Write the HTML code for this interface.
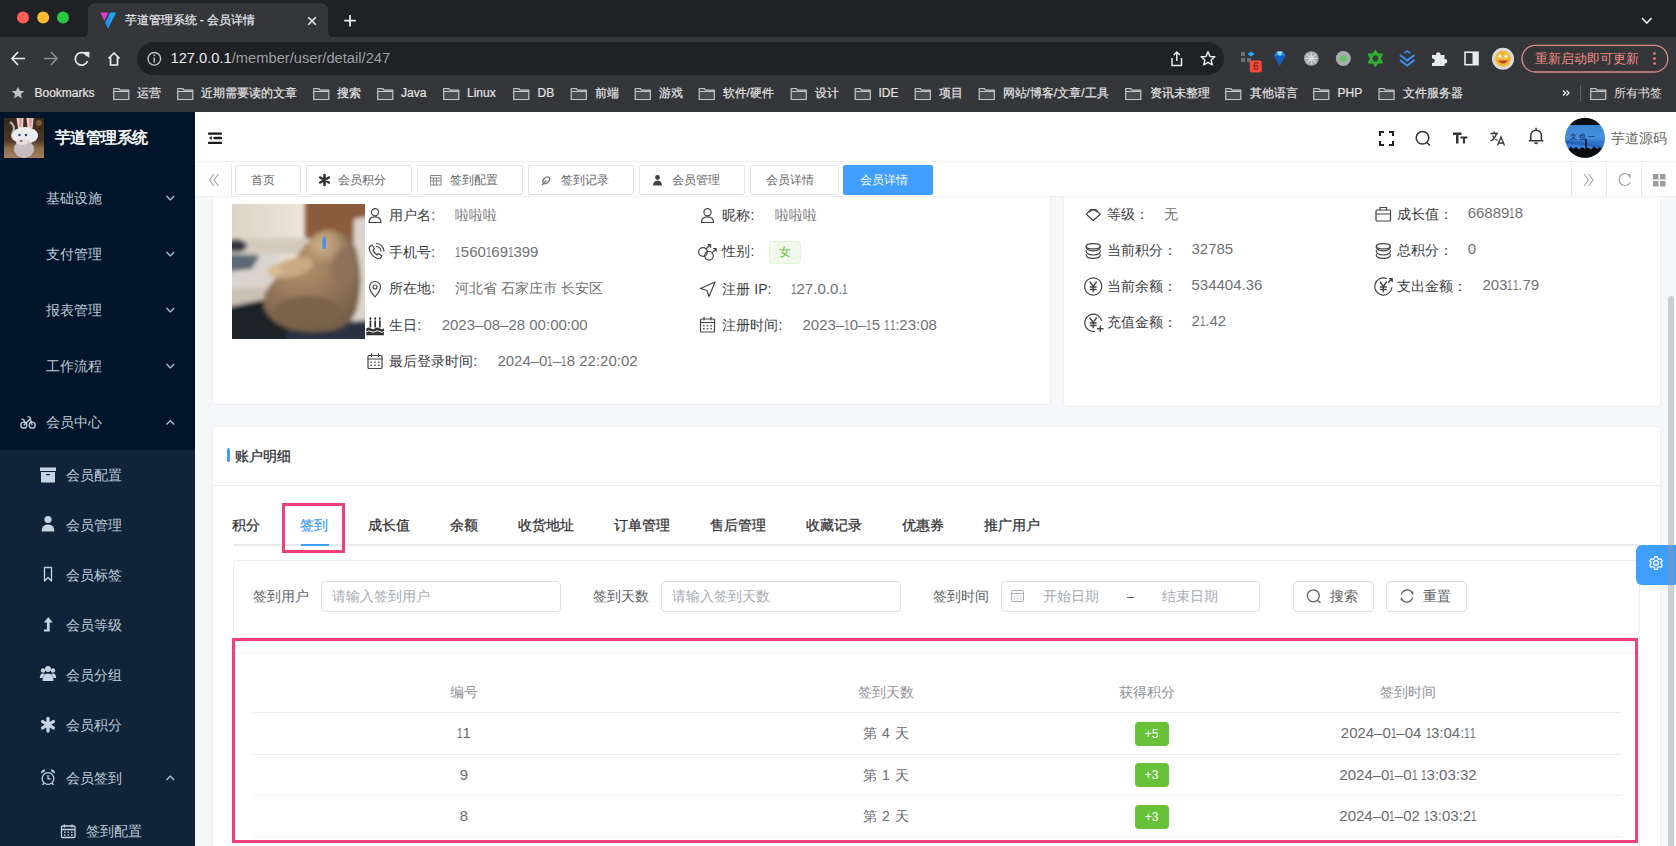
<!DOCTYPE html>
<html><head><meta charset="utf-8">
<style>
*{box-sizing:border-box;margin:0;padding:0}
html,body{width:1676px;height:846px;overflow:hidden;background:#f5f7f9;font-family:"Liberation Sans",sans-serif}
.a{position:absolute}
.t{position:absolute;white-space:nowrap}
svg{position:absolute;overflow:visible}
/* chrome */
#tabstrip{left:0;top:0;width:1676px;height:38px;background:#202124}
#toolbar{left:0;top:37px;width:1676px;height:75px;background:#35363a}
#omni{left:137px;top:42px;width:1087px;height:33px;border-radius:17px;background:#202124}
.bm{font-size:12px;color:#e3e3e3;line-height:16px;top:85px;-webkit-text-stroke:0.2px #e3e3e3}
/* app */
#side{left:0;top:112px;width:195px;height:734px;background:#001529}
#sub{left:0;top:450px;width:195px;height:396px;background:#0f2438}
.mi{font-size:14px;color:#bfcbd9;line-height:20px}
#header{left:195px;top:112px;width:1481px;height:50px;background:#fff;border-bottom:1px solid #eef0f3}
#tags{left:195px;top:162px;width:1481px;height:35px;background:#fff;border-bottom:1px solid #eef0f3}
.tag{position:absolute;top:165px;height:30px;border:1px solid #e3e3e5;border-radius:2px;font-size:12px;color:#666;line-height:29.5px;white-space:nowrap}
.card{position:absolute;background:#fff;border:1px solid #ebeef5;border-radius:4px}
.lab{font-size:14px;color:#303133;line-height:20px}
.val{font-size:14px;color:#606266;line-height:20px}
.lab2{font-size:14px;line-height:20px;color:#3b3c3f}
.val2{font-size:14px;line-height:20px;color:#707275}
.num{font-size:15px}
.n1{display:inline-block;width:5.45px;text-indent:-1.45px;transform:scaleX(.68)}
</style></head><body>
<!-- ============ BROWSER CHROME ============ -->
<div id="tabstrip" class="a"></div>
<div id="toolbar" class="a"></div>
<div id="omni" class="a"></div>

<svg style="left:0;top:0" width="1676" height="112">
 <path d="M80,38 Q88,38 88,30 L88,11 Q88,3 96,3 L320,3 Q328,3 328,11 L328,30 Q328,38 336,38 Z" fill="#35363a"/>
 <circle cx="23" cy="17.5" r="6" fill="#fe5f57"/>
 <circle cx="43.2" cy="17.5" r="6" fill="#febc2e"/>
 <circle cx="63" cy="17.5" r="6" fill="#28c840"/>
 <!-- favicon -->
 <path d="M100.3,12.6 L108.4,12.6 L104.3,20.8 Z" fill="#e23ec8"/>
 <path d="M110,12.6 L116.2,12.6 L108.1,28.6 L105.2,22.7 Z" fill="#1aa6f2"/>
 <path d="M105.2,22.7 L108.3,16.5 L110.5,18 L108.1,28.6 Z" fill="#2f7fe6" opacity=".7"/>
 <!-- close x -->
 <path d="M308.3,17.3 L315.8,24.8 M315.8,17.3 L308.3,24.8" stroke="#e8eaed" stroke-width="1.6"/>
 <!-- plus -->
 <path d="M350,15 V26.5 M344.3,20.7 H355.8" stroke="#e8eaed" stroke-width="1.8"/>
 <!-- chevron down -->
 <path d="M1642,18 L1646.8,23 L1651.6,18" stroke="#e8eaed" stroke-width="1.6" fill="none"/>
 <!-- back -->
 <path d="M12,58.5 H25 M18,52 L12,58.5 L18,65" stroke="#e8eaed" stroke-width="1.7" fill="none"/>
 <!-- fwd -->
 <path d="M44,58.5 H57 M51,52 L57,58.5 L51,65" stroke="#8b8d91" stroke-width="1.7" fill="none"/>
 <!-- reload -->
 <path d="M87.2,56 A6.3,6.3 0 1 0 87.5,61" stroke="#e8eaed" stroke-width="1.7" fill="none"/>
 <path d="M84,52.5 L89,52.3 L88.8,57.3 Z" fill="#e8eaed" stroke="#e8eaed" stroke-width="1"/>
 <!-- home -->
 <path d="M108.5,58.5 L114,53 L119.5,58.5 M110.5,57 V65 H117.5 V57" stroke="#e8eaed" stroke-width="1.7" fill="none" stroke-linejoin="round"/>
 <!-- info -->
 <circle cx="154.3" cy="58.8" r="6.3" stroke="#bdc1c6" stroke-width="1.4" fill="none"/>
 <path d="M154.3,57.5 V62.5" stroke="#bdc1c6" stroke-width="1.5"/>
 <circle cx="154.3" cy="55.3" r=".9" fill="#bdc1c6"/>
 <!-- share -->
 <path d="M1172,58 V65.5 H1181.5 V58 M1176.8,61 V52 M1173.8,55 L1176.8,52 L1179.8,55" stroke="#e8eaed" stroke-width="1.5" fill="none" stroke-linejoin="round"/>
 <!-- star -->
 <path d="M1208,51.8 L1210,56.4 L1214.8,56.8 L1211.2,60 L1212.2,64.8 L1208,62.3 L1203.8,64.8 L1204.8,60 L1201.2,56.8 L1206,56.4 Z" stroke="#e8eaed" stroke-width="1.5" fill="none" stroke-linejoin="round"/>
 <!-- ext1 grid + badge -->
 <rect x="1241" y="52" width="4" height="4" fill="#6b6e73"/><rect x="1241" y="58" width="4" height="4" fill="#6b6e73"/><rect x="1247" y="58" width="4" height="4" fill="#6b6e73"/>
 <path d="M1251,51.5 L1254.5,54 L1251,56.5 L1247.5,54 Z" fill="#20b0f8"/>
 <rect x="1249.7" y="60.6" width="12" height="12" rx="2" fill="#f04a3a"/>
 <!-- diamond -->
 <path d="M1274,55.5 L1277,51.5 L1282.5,51.5 L1285.5,55.5 L1279.7,65.5 Z" fill="#1e8ef0"/>
 <path d="M1274,55.5 L1285.5,55.5 L1279.7,65.5 Z" fill="#0d5fc0"/>
 <path d="M1277,51.5 L1282.5,51.5 L1281,55.5 L1278.5,55.5 Z" fill="#9ad8ff"/>
 <!-- gray circles -->
 <circle cx="1311.3" cy="58.5" r="7.3" fill="#a9abae"/>
 <path d="M1307,54.5 L1315.6,62.5 M1315.6,54.5 L1307,62.5 M1311.3,52.5 V64.5 M1305.3,58.5 H1317.3" stroke="#dadcdf" stroke-width="1.2"/>
 <circle cx="1343.3" cy="58.5" r="7.5" fill="#a9abae"/>
 <circle cx="1343.3" cy="58.5" r="3.6" fill="#6cc26c"/>
 <!-- green star -->
 <path d="M1375.4,51 L1382,62.5 H1368.8 Z M1375.4,66 L1368.8,54.5 H1382 Z" stroke="#2fb52f" stroke-width="1.8" fill="none" stroke-linejoin="round"/>
 <!-- blue chevrons -->
 <path d="M1400,55 L1407.2,60.5 L1414.4,55 M1400,60 L1407.2,65.5 L1414.4,60" stroke="#3d8ef5" stroke-width="2" fill="none"/>
 <path d="M1404.5,53 L1407.2,51 L1410,53" stroke="#3d8ef5" stroke-width="1.6" fill="none"/>
 <!-- puzzle -->
 <path d="M1432,55 H1436 A2.3,2.3 0 1 1 1440.5,55 H1444.5 V59 A2.3,2.3 0 1 1 1444.5,63.5 V66 H1432 V63 A2.3,2.3 0 1 0 1432,58.5 Z" fill="#e8eaed"/>
 <!-- sidebar icon -->
 <rect x="1465" y="52.2" width="13" height="12.5" stroke="#e8eaed" stroke-width="1.6" fill="none"/>
 <rect x="1472.5" y="52.2" width="5.5" height="12.5" fill="#e8eaed"/>
 <!-- emoji avatar -->
 <circle cx="1503" cy="58.8" r="11" fill="#dadada"/>
 <circle cx="1503" cy="58.8" r="8" fill="#f5b731"/>
 <path d="M1497.5,60.5 Q1503,66.5 1508.5,60.5 Z" fill="#c0392b"/>
 <circle cx="1500" cy="56.2" r="1.6" fill="#fff"/><circle cx="1506" cy="56.2" r="1.6" fill="#fff"/>
 <!-- update pill -->
 <rect x="1522" y="45.3" width="145.8" height="26.7" rx="13.3" stroke="#d98a85" stroke-width="1.3" fill="none"/>
 <circle cx="1654.5" cy="53.5" r="1.3" fill="#f28b82"/><circle cx="1654.5" cy="58.5" r="1.3" fill="#f28b82"/><circle cx="1654.5" cy="63.5" r="1.3" fill="#f28b82"/>
 <!-- bookmarks star -->
 <path d="M18,86.8 L19.8,90.8 L24.2,91.2 L20.9,94.1 L21.9,98.4 L18,96.1 L14.1,98.4 L15.1,94.1 L11.8,91.2 L16.2,90.8 Z" fill="#bdc1c6"/>
 <!-- » and separator -->
 <path d="M1563,90.5 L1565.5,93 L1563,95.5 M1566.5,90.5 L1569,93 L1566.5,95.5" stroke="#e8eaed" stroke-width="1.3" fill="none"/>
 <rect x="1580" y="85" width="1" height="16" fill="#5f6368"/>
</svg>
<div class="t" style="left:124.5px;top:12px;font-size:12px;line-height:16px;color:#e8eaed;-webkit-text-stroke:0.2px #e8eaed">芋道管理系统 - 会员详情</div>
<div class="t" style="left:170.5px;top:49.5px;font-size:14.7px;line-height:17px;color:#e8eaed">127.0.0.1<span style="color:#9aa0a6">/member/user/detail/247</span></div>
<div class="t" style="left:1249.7px;width:12px;text-align:center;top:60.8px;font-size:10px;line-height:12px;color:#6a1a10">6</div>
<div class="t" style="left:1534.5px;top:50.5px;font-size:13px;line-height:16px;color:#f28b82">重新启动即可更新</div>
<div class="t" style="left:1614px;top:85px;font-size:12px;line-height:16px;color:#e3e3e3">所有书签</div>
<svg style="left:0;top:0" width="1676" height="112"><path d="M113.7,88.5 h5 l1.5,1.6 h8.6 v9.4 h-15.1 Z" fill="#4a4c50" stroke="#c4c7c5" stroke-width="1.2" stroke-linejoin="round"/><path d="M113.7,91.5 h15.1" stroke="#c4c7c5" stroke-width="1"/><path d="M177.7,88.5 h5 l1.5,1.6 h8.6 v9.4 h-15.1 Z" fill="#4a4c50" stroke="#c4c7c5" stroke-width="1.2" stroke-linejoin="round"/><path d="M177.7,91.5 h15.1" stroke="#c4c7c5" stroke-width="1"/><path d="M313.7,88.5 h5 l1.5,1.6 h8.6 v9.4 h-15.1 Z" fill="#4a4c50" stroke="#c4c7c5" stroke-width="1.2" stroke-linejoin="round"/><path d="M313.7,91.5 h15.1" stroke="#c4c7c5" stroke-width="1"/><path d="M377.7,88.5 h5 l1.5,1.6 h8.6 v9.4 h-15.1 Z" fill="#4a4c50" stroke="#c4c7c5" stroke-width="1.2" stroke-linejoin="round"/><path d="M377.7,91.5 h15.1" stroke="#c4c7c5" stroke-width="1"/><path d="M443.7,88.5 h5 l1.5,1.6 h8.6 v9.4 h-15.1 Z" fill="#4a4c50" stroke="#c4c7c5" stroke-width="1.2" stroke-linejoin="round"/><path d="M443.7,91.5 h15.1" stroke="#c4c7c5" stroke-width="1"/><path d="M513.7,88.5 h5 l1.5,1.6 h8.6 v9.4 h-15.1 Z" fill="#4a4c50" stroke="#c4c7c5" stroke-width="1.2" stroke-linejoin="round"/><path d="M513.7,91.5 h15.1" stroke="#c4c7c5" stroke-width="1"/><path d="M571.2,88.5 h5 l1.5,1.6 h8.6 v9.4 h-15.1 Z" fill="#4a4c50" stroke="#c4c7c5" stroke-width="1.2" stroke-linejoin="round"/><path d="M571.2,91.5 h15.1" stroke="#c4c7c5" stroke-width="1"/><path d="M635.2,88.5 h5 l1.5,1.6 h8.6 v9.4 h-15.1 Z" fill="#4a4c50" stroke="#c4c7c5" stroke-width="1.2" stroke-linejoin="round"/><path d="M635.2,91.5 h15.1" stroke="#c4c7c5" stroke-width="1"/><path d="M699.2,88.5 h5 l1.5,1.6 h8.6 v9.4 h-15.1 Z" fill="#4a4c50" stroke="#c4c7c5" stroke-width="1.2" stroke-linejoin="round"/><path d="M699.2,91.5 h15.1" stroke="#c4c7c5" stroke-width="1"/><path d="M791.2,88.5 h5 l1.5,1.6 h8.6 v9.4 h-15.1 Z" fill="#4a4c50" stroke="#c4c7c5" stroke-width="1.2" stroke-linejoin="round"/><path d="M791.2,91.5 h15.1" stroke="#c4c7c5" stroke-width="1"/><path d="M855.2,88.5 h5 l1.5,1.6 h8.6 v9.4 h-15.1 Z" fill="#4a4c50" stroke="#c4c7c5" stroke-width="1.2" stroke-linejoin="round"/><path d="M855.2,91.5 h15.1" stroke="#c4c7c5" stroke-width="1"/><path d="M915.2,88.5 h5 l1.5,1.6 h8.6 v9.4 h-15.1 Z" fill="#4a4c50" stroke="#c4c7c5" stroke-width="1.2" stroke-linejoin="round"/><path d="M915.2,91.5 h15.1" stroke="#c4c7c5" stroke-width="1"/><path d="M979.2,88.5 h5 l1.5,1.6 h8.6 v9.4 h-15.1 Z" fill="#4a4c50" stroke="#c4c7c5" stroke-width="1.2" stroke-linejoin="round"/><path d="M979.2,91.5 h15.1" stroke="#c4c7c5" stroke-width="1"/><path d="M1125.7,88.5 h5 l1.5,1.6 h8.6 v9.4 h-15.1 Z" fill="#4a4c50" stroke="#c4c7c5" stroke-width="1.2" stroke-linejoin="round"/><path d="M1125.7,91.5 h15.1" stroke="#c4c7c5" stroke-width="1"/><path d="M1225.7,88.5 h5 l1.5,1.6 h8.6 v9.4 h-15.1 Z" fill="#4a4c50" stroke="#c4c7c5" stroke-width="1.2" stroke-linejoin="round"/><path d="M1225.7,91.5 h15.1" stroke="#c4c7c5" stroke-width="1"/><path d="M1313.7,88.5 h5 l1.5,1.6 h8.6 v9.4 h-15.1 Z" fill="#4a4c50" stroke="#c4c7c5" stroke-width="1.2" stroke-linejoin="round"/><path d="M1313.7,91.5 h15.1" stroke="#c4c7c5" stroke-width="1"/><path d="M1379.0,88.5 h5 l1.5,1.6 h8.6 v9.4 h-15.1 Z" fill="#4a4c50" stroke="#c4c7c5" stroke-width="1.2" stroke-linejoin="round"/><path d="M1379.0,91.5 h15.1" stroke="#c4c7c5" stroke-width="1"/><path d="M1590.7,88.5 h5 l1.5,1.6 h8.6 v9.4 h-15.1 Z" fill="#4a4c50" stroke="#c4c7c5" stroke-width="1.2" stroke-linejoin="round"/><path d="M1590.7,91.5 h15.1" stroke="#c4c7c5" stroke-width="1"/></svg>
<div class="t bm" style="left:34.5px">Bookmarks</div>
<div class="t bm" style="left:137px">运营</div>
<div class="t bm" style="left:201px">近期需要读的文章</div>
<div class="t bm" style="left:337px">搜索</div>
<div class="t bm" style="left:401px">Java</div>
<div class="t bm" style="left:467px">Linux</div>
<div class="t bm" style="left:537.5px">DB</div>
<div class="t bm" style="left:594.5px">前端</div>
<div class="t bm" style="left:658.5px">游戏</div>
<div class="t bm" style="left:722.5px">软件/硬件</div>
<div class="t bm" style="left:814.5px">设计</div>
<div class="t bm" style="left:878.5px">IDE</div>
<div class="t bm" style="left:938.5px">项目</div>
<div class="t bm" style="left:1002.5px">网站/博客/文章/工具</div>
<div class="t bm" style="left:1149.5px">资讯未整理</div>
<div class="t bm" style="left:1249.5px">其他语言</div>
<div class="t bm" style="left:1337.5px">PHP</div>
<div class="t bm" style="left:1402.5px">文件服务器</div>
<div id="side" class="a"></div>
<div id="sub" class="a"></div>

<!-- ============ CONTENT ============ -->
<div class="card" style="left:211.5px;top:150px;width:839.5px;height:255px"></div>
<div class="card" style="left:1063px;top:150px;width:597.5px;height:257px"></div>
<svg style="left:232px;top:204px" width="133" height="135">
 <defs>
  <linearGradient id="wall" x1="0" y1="0" x2="1" y2="0"><stop offset="0" stop-color="#ddd3c6"/><stop offset=".5" stop-color="#ece4d9"/><stop offset="1" stop-color="#e4dbd0"/></linearGradient>
  <radialGradient id="cat" cx=".4" cy=".3" r=".7"><stop offset="0" stop-color="#b39570"/><stop offset=".55" stop-color="#95785a"/><stop offset="1" stop-color="#75604a"/></radialGradient>
  <radialGradient id="head" cx=".35" cy=".4" r=".65"><stop offset="0" stop-color="#cfb28c"/><stop offset=".6" stop-color="#b0926e"/><stop offset="1" stop-color="#8e745a"/></radialGradient>
  <filter id="bl" x="-10%" y="-10%" width="120%" height="120%"><feGaussianBlur stdDeviation="2.2"/></filter>
  <clipPath id="pc"><rect width="133" height="135"/></clipPath>
 </defs>
 <g clip-path="url(#pc)">
 <rect width="133" height="135" fill="url(#wall)"/>
 <g filter="url(#bl)">
  <path d="M73,-8 L140,-8 L140,38 L126,44 L73,34 Z" fill="#8c5a3e"/>
  <path d="M122,15 L140,12 L140,125 L120,122 Z" fill="#ddd5cb"/>
  <path d="M-8,35 L75,34 L72,50 L-8,50 Z" fill="#d3c9bc"/>
  <ellipse cx="4" cy="42" rx="11" ry="6.5" fill="#30343c"/>
  <path d="M-8,48 L46,49 L52,82 L-8,86 Z" fill="#d9d4cd"/>
  <path d="M-8,50 L28,51 L20,65 L-8,68 Z" fill="#5c6874"/>
  <path d="M-8,86 L50,82 L30,98 L-8,106 Z" fill="#cac0b4"/>
  <path d="M-8,104 L30,96 L62,120 L62,142 L-8,142 Z" fill="#1f2026"/>
  <path d="M55,121 L140,116 L140,142 L55,142 Z" fill="#2a3342"/>
  <path d="M62,58 Q72,36 92,28 Q115,24 124,45 Q132,72 126,100 Q122,124 96,127 Q66,131 46,120 Q28,108 32,92 Q38,76 62,58 Z" fill="url(#cat)"/>
  <ellipse cx="96" cy="45" rx="20" ry="19" fill="url(#head)"/>
  <ellipse cx="112" cy="64" rx="11" ry="20" fill="#8c735a"/>
  <ellipse cx="60" cy="64" rx="22" ry="9" fill="#c8ab84" transform="rotate(-15 60 64)"/>
  <ellipse cx="42" cy="67" rx="7" ry="5.5" fill="#d6bd95"/>
  <ellipse cx="76" cy="108" rx="34" ry="16" fill="#7a624c"/>
 </g>
 <rect x="90.5" y="33" width="3.5" height="12" rx="1.5" fill="#4a8fe0"/>
 </g>
</svg>
<div class="t lab2" style="left:389.3px;top:205.0px">用户名:</div>
<div class="t val2" style="left:455.4px;top:205.0px">啦啦啦</div>
<div class="t lab2" style="left:389.3px;top:242.2px">手机号:</div>
<div class="t val2 num" style="left:455.4px;top:242.2px"><span class="n1">1</span>560<span class="n1">1</span>69<span class="n1">1</span>399</div>
<div class="t lab2" style="left:389.3px;top:278.4px">所在地:</div>
<div class="t val2" style="left:455.4px;top:278.4px">河北省 石家庄市 长安区</div>
<div class="t lab2" style="left:389.3px;top:314.6px">生日:</div>
<div class="t val2 num" style="left:441.7px;top:314.6px">2023–08–28 00:00:00</div>
<div class="t lab2" style="left:389.3px;top:351.0px">最后登录时间:</div>
<div class="t val2 num" style="left:497.4px;top:351.0px">2024–0<span class="n1">1</span>–<span class="n1">1</span>8 22:20:02</div>
<div class="t lab2" style="left:722.4px;top:204.9px">昵称:</div>
<div class="t val2" style="left:774.5px;top:204.9px">啦啦啦</div>
<div class="t lab2" style="left:722.4px;top:278.6px">注册 IP:</div>
<div class="t val2 num" style="left:791.1px;top:278.6px"><span class="n1">1</span>27.0.0.<span class="n1">1</span></div>
<div class="t lab2" style="left:722.4px;top:314.5px">注册时间:</div>
<div class="t val2 num" style="left:802.5px;top:314.5px">2023–<span class="n1">1</span>0–<span class="n1">1</span>5 <span class="n1">1</span><span class="n1">1</span>:23:08</div>
<div class="t lab2" style="left:1107px;top:204.0px">等级：</div>
<div class="t val2" style="left:1163.6px;top:204.0px">无</div>
<div class="t lab2" style="left:1107px;top:240.0px">当前积分：</div>
<div class="t val2 num" style="left:1191.5px;top:239.2px">32785</div>
<div class="t lab2" style="left:1107px;top:276.0px">当前余额：</div>
<div class="t val2 num" style="left:1191.5px;top:275.2px">534404.36</div>
<div class="t lab2" style="left:1107px;top:311.8px">充值金额：</div>
<div class="t val2 num" style="left:1191.5px;top:311.0px">2<span class="n1">1</span>.42</div>
<div class="t lab2" style="left:1397.2px;top:204.0px">成长值：</div>
<div class="t val2 num" style="left:1467.7px;top:203.2px">66889<span class="n1">1</span>8</div>
<div class="t lab2" style="left:1397.2px;top:240.0px">总积分：</div>
<div class="t val2 num" style="left:1467.7px;top:239.2px">0</div>
<div class="t lab2" style="left:1397.2px;top:276.0px">支出金额：</div>
<div class="t val2 num" style="left:1482.4px;top:275.2px">203<span class="n1">1</span><span class="n1">1</span>.79</div>
<div class="t lab2" style="left:722.4px;top:241.4px">性别:</div>
<div class="a" style="left:769.2px;top:240.6px;width:32px;height:23.7px;background:#f0f9eb;border:1px solid #e1f3d8;border-radius:4px;font-size:12px;line-height:21px;color:#67c23a;text-align:center">女</div>

<svg style="left:0;top:0" width="1676" height="846">
 <g stroke="#444" stroke-width="1.2" fill="none" stroke-linecap="round" stroke-linejoin="round">
  <!-- user c1 -->
  <circle cx="375" cy="212.3" r="3.6"/><path d="M369,222.5 Q369,216.8 375,216.8 Q381,216.8 381,222.5 Z"/>
  <!-- phone -->
  <path d="M369.5,247 L372,245 L374.5,248.5 L373,250 Q374,253 377,255 L378.5,253.5 L382,256 L380,258.5 Q375,259 371.5,254 Q368.5,250 369.5,247 Z"/>
  <path d="M376.5,246.5 A5,5 0 0 1 381,251 M376.5,243.5 A8,8 0 0 1 384,251"/>
  <!-- pin -->
  <path d="M375,296.8 Q369.5,291 369.5,287 A5.5,5.5 0 0 1 380.5,287 Q380.5,291 375,296.8 Z"/><circle cx="375" cy="287" r="2"/>
  <!-- calendar c1 -->
  <rect x="368" y="355.5" width="14" height="13" rx="1"/><path d="M368,359 H382 M371.5,353.5 V356.5 M378.5,353.5 V356.5"/>
  <!-- user c2 -->
  <circle cx="707.5" cy="212.3" r="3.6"/><path d="M701.5,222.5 Q701.5,216.8 707.5,216.8 Q713.5,216.8 713.5,222.5 Z"/>
  <!-- gender -->
  <circle cx="703" cy="252" r="4.3"/><circle cx="709" cy="255.8" r="4.3"/><path d="M706,249 L710.3,244.8 M708,244.6 H710.6 V247.2 M712,252.8 L716,248.8 M713.7,248.6 H716.2 V251.1"/>
  <!-- nav arrow -->
  <path d="M715,282 L700.5,288.5 L707,290.5 L709,296.5 Z"/>
  <!-- calendar c2 -->
  <rect x="700.5" y="319" width="14" height="13" rx="1"/><path d="M700.5,322.5 H714.5 M704,317 V320 M711,317 V320"/>
  <!-- diamond -->
  <path d="M1086.3,214.3 L1090.5,209.6 H1096 L1100.2,214.3 L1093.2,220.5 Z"/><path d="M1089.5,211.8 L1093.2,209.6 L1097,211.8"/>
  <!-- coins -->
  <ellipse cx="1093.2" cy="246.3" rx="7" ry="2.6"/><path d="M1086.2,246.3 Q1085.6,250.5 1093.2,250.8 Q1100.8,250.5 1100.2,246.3 M1086.2,250.5 Q1085.6,254.7 1093.2,255 Q1100.8,254.7 1100.2,250.5 M1086.2,254.5 Q1085.6,258.3 1093.2,258.3 Q1100.8,258.3 1100.2,254.5"/>
  <ellipse cx="1383.3" cy="246.3" rx="7" ry="2.6"/><path d="M1376.3,246.3 Q1375.7,250.5 1383.3,250.8 Q1390.9,250.5 1390.3,246.3 M1376.3,250.5 Q1375.7,254.7 1383.3,255 Q1390.9,254.7 1390.3,250.5 M1376.3,254.5 Q1375.7,258.3 1383.3,258.3 Q1390.9,258.3 1390.3,254.5"/>
  <!-- yen circle -->
  <circle cx="1093.2" cy="286.5" r="8.6"/><path d="M1090,282 L1093.2,286.3 L1096.4,282 M1093.2,286.3 V291.8 M1090.3,287 H1096.1 M1090.3,289.5 H1096.1" stroke-width="1.4"/>
  <!-- yen plus -->
  <path d="M1101.6,320.5 A8.6,8.6 0 1 0 1094.5,331.3"/><path d="M1090,318 L1093.2,322.3 L1096.4,318 M1093.2,322.3 V327.8 M1090.3,323 H1096.1 M1090.3,325.5 H1096.1" stroke-width="1.4"/><path d="M1097.5,328.8 H1103 M1100.25,326 V331.6" stroke-width="1.4"/>
  <!-- briefcase -->
  <rect x="1376" y="210" width="14.5" height="11" rx="1"/><path d="M1380,210 V207.5 H1386.5 V210 M1376,214 H1390.5"/>
  <!-- yen arrow -->
  <path d="M1391.9,287.5 A8.6,8.6 0 1 1 1386.5,278.5"/><path d="M1380.1,282 L1383.3,286.3 L1386.5,282 M1383.3,286.3 V291.8 M1380.4,287 H1386.2 M1380.4,289.5 H1386.2" stroke-width="1.4"/><path d="M1388.5,282.3 L1391.8,279 M1389.3,278.6 H1392.2 V281.5" stroke-width="1.4"/>
 </g>
 <!-- cake -->
 <g fill="#333">
  <rect x="369.6" y="320.5" width="1.7" height="7"/><rect x="374.3" y="320.5" width="1.7" height="7"/><rect x="379" y="320.5" width="1.7" height="7"/>
  <ellipse cx="370.45" cy="318.6" rx=".9" ry="1.3"/><ellipse cx="375.15" cy="318.6" rx=".9" ry="1.3"/><ellipse cx="379.85" cy="318.6" rx=".9" ry="1.3"/>
  <path d="M366.3,328.8 Q368.5,326.6 370.7,328.3 Q372.9,330 375.1,328.3 Q377.3,326.6 379.5,328.3 Q381.7,330 383.9,328.3 V335.2 H366.3 Z"/>
 </g>
 <path d="M366.5,332 Q368.7,330 370.9,331.5 Q373.1,333 375.3,331.5 Q377.5,330 379.7,331.5 Q381.9,333 383.7,331.5" stroke="#fff" stroke-width="1" fill="none"/>
 <g fill="#555"><rect x="370.5" y="361.5" width="1.6" height="1.4"/><rect x="374.2" y="361.5" width="1.6" height="1.4"/><rect x="377.9" y="361.5" width="1.6" height="1.4"/><rect x="370.5" y="364.5" width="1.6" height="1.4"/><rect x="374.2" y="364.5" width="1.6" height="1.4"/><rect x="377.9" y="364.5" width="1.6" height="1.4"/>
 <rect x="703" y="325" width="1.6" height="1.4"/><rect x="706.7" y="325" width="1.6" height="1.4"/><rect x="710.4" y="325" width="1.6" height="1.4"/><rect x="703" y="328" width="1.6" height="1.4"/><rect x="706.7" y="328" width="1.6" height="1.4"/><rect x="710.4" y="328" width="1.6" height="1.4"/></g>
</svg>

<!-- ============ ACCOUNT DETAIL ============ -->
<div class="card" style="left:211.5px;top:425.5px;width:1449px;height:500px"></div>
<div class="a" style="left:227px;top:448px;width:3px;height:14px;background:#409eff;border-radius:1.5px"></div>
<div class="t" style="left:235px;top:446px;font-size:14px;line-height:20px;color:#303133;-webkit-text-stroke:0.3px #303133">账户明细</div>
<div class="a" style="left:213px;top:484.5px;width:1446.5px;height:1px;background:#ebeef5"></div>
<div class="a" style="left:232.5px;top:543.5px;width:1407.5px;height:2px;background:#e6e8eb"></div>
<div class="a" style="left:300.5px;top:543.5px;width:28px;height:2px;background:#409eff"></div>
<div class="t" style="left:231.7px;top:514.8px;font-size:14px;line-height:20px;color:#303133;-webkit-text-stroke:0.25px #303133">积分</div>
<div class="t" style="left:299.7px;top:514.8px;font-size:14px;line-height:20px;color:#409eff;-webkit-text-stroke:0.25px #409eff">签到</div>
<div class="t" style="left:367.7px;top:514.8px;font-size:14px;line-height:20px;color:#303133;-webkit-text-stroke:0.25px #303133">成长值</div>
<div class="t" style="left:449.7px;top:514.8px;font-size:14px;line-height:20px;color:#303133;-webkit-text-stroke:0.25px #303133">余额</div>
<div class="t" style="left:517.7px;top:514.8px;font-size:14px;line-height:20px;color:#303133;-webkit-text-stroke:0.25px #303133">收货地址</div>
<div class="t" style="left:613.7px;top:514.8px;font-size:14px;line-height:20px;color:#303133;-webkit-text-stroke:0.25px #303133">订单管理</div>
<div class="t" style="left:709.7px;top:514.8px;font-size:14px;line-height:20px;color:#303133;-webkit-text-stroke:0.25px #303133">售后管理</div>
<div class="t" style="left:805.7px;top:514.8px;font-size:14px;line-height:20px;color:#303133;-webkit-text-stroke:0.25px #303133">收藏记录</div>
<div class="t" style="left:901.7px;top:514.8px;font-size:14px;line-height:20px;color:#303133;-webkit-text-stroke:0.25px #303133">优惠券</div>
<div class="t" style="left:983.7px;top:514.8px;font-size:14px;line-height:20px;color:#303133;-webkit-text-stroke:0.25px #303133">推广用户</div>

<!-- search card -->
<div class="card" style="left:232.5px;top:560px;width:1407px;height:75px"></div>
<div class="t" style="left:253px;top:585.7px;font-size:14px;line-height:20px;color:#606266">签到用户</div>
<div class="a" style="left:321px;top:580.5px;width:240px;height:31.5px;border:1px solid #dcdfe6;border-radius:4px"></div>
<div class="t" style="left:332px;top:585.5px;font-size:14px;line-height:20px;color:#a8abb2">请输入签到用户</div>
<div class="t" style="left:592.5px;top:585.7px;font-size:14px;line-height:20px;color:#606266">签到天数</div>
<div class="a" style="left:661px;top:580.5px;width:240px;height:31.5px;border:1px solid #dcdfe6;border-radius:4px"></div>
<div class="t" style="left:671.5px;top:585.5px;font-size:14px;line-height:20px;color:#a8abb2">请输入签到天数</div>
<div class="t" style="left:933px;top:585.7px;font-size:14px;line-height:20px;color:#606266">签到时间</div>
<div class="a" style="left:1000.5px;top:580.5px;width:259.5px;height:31.5px;border:1px solid #dcdfe6;border-radius:4px"></div>
<div class="t" style="left:1043px;top:585.5px;font-size:14px;line-height:20px;color:#a8abb2">开始日期</div>
<div class="t" style="left:1162px;top:585.5px;font-size:14px;line-height:20px;color:#a8abb2">结束日期</div>
<div class="a" style="left:1126.5px;top:596.5px;width:7.5px;height:1.3px;background:#606266"></div>
<div class="a" style="left:1292.5px;top:580.5px;width:81px;height:31.5px;border:1px solid #dcdfe6;border-radius:4px"></div>
<div class="t" style="left:1329.5px;top:586px;font-size:14px;line-height:20px;color:#606266">搜索</div>
<div class="a" style="left:1385.5px;top:580.5px;width:81px;height:31.5px;border:1px solid #dcdfe6;border-radius:4px"></div>
<div class="t" style="left:1423px;top:586px;font-size:14px;line-height:20px;color:#606266">重置</div>
<svg style="left:0;top:0" width="1676" height="846">
 <g stroke="#a8abb2" stroke-width="1" fill="none"><rect x="1011.5" y="590.5" width="12" height="11" rx="1"/><path d="M1011.5,593.5 H1023.5"/></g>
 <g fill="#c0c4cc"><rect x="1013.5" y="595.5" width="1.5" height="1.2"/><rect x="1016.7" y="595.5" width="1.5" height="1.2"/><rect x="1019.9" y="595.5" width="1.5" height="1.2"/><rect x="1013.5" y="598" width="1.5" height="1.2"/><rect x="1016.7" y="598" width="1.5" height="1.2"/><rect x="1019.9" y="598" width="1.5" height="1.2"/></g>
 <g stroke="#606266" stroke-width="1.3" fill="none">
  <circle cx="1313.3" cy="595.8" r="6"/><path d="M1317.6,600.2 L1320.5,603"/>
  <path d="M1412.5,593.5 A5.8,5.8 0 0 0 1401.5,594.5 M1401.5,598.5 A5.8,5.8 0 0 0 1412.5,597.5"/>
 </g>
 <path d="M1410.5,591.5 L1413.5,591.8 L1413,595 Z M1403.5,600.5 L1400.5,600.2 L1401,597 Z" fill="#606266"/>
</svg>
<!-- table card -->
<div class="card" style="left:232.5px;top:651.5px;width:1407px;height:300px"></div>
<div class="t" style="left:364px;width:200px;text-align:center;top:682px;font-size:14px;line-height:20px;color:#909399">编号</div>
<div class="t" style="left:786px;width:200px;text-align:center;top:682px;font-size:14px;line-height:20px;color:#909399">签到天数</div>
<div class="t" style="left:1047px;width:200px;text-align:center;top:682px;font-size:14px;line-height:20px;color:#909399">获得积分</div>
<div class="t" style="left:1308px;width:200px;text-align:center;top:682px;font-size:14px;line-height:20px;color:#909399">签到时间</div>
<div class="a" style="left:253px;top:711.5px;width:1366.5px;height:1px;background:#ebeef5"></div>
<div class="a" style="left:253px;top:753.5px;width:1366.5px;height:1px;background:#ebeef5"></div>
<div class="a" style="left:253px;top:795px;width:1366.5px;height:1px;background:#ebeef5"></div>
<div class="a" style="left:253px;top:836px;width:1366.5px;height:1px;background:#ebeef5"></div>
<div class="t" style="left:364px;width:200px;text-align:center;top:723.4px;font-size:14px;line-height:20px;color:#696b6f;font-size:15px"><span class="n1">1</span>1</div>
<div class="t" style="left:786px;width:200px;text-align:center;top:723.4px;font-size:14px;line-height:20px;color:#696b6f;word-spacing:1px">第 4 天</div>
<div class="a" style="left:1134.5px;top:721.6px;width:34px;height:24px;background:#67c23a;border-radius:4px;color:#fff;font-size:12px;line-height:24px;text-align:center">+5</div>
<div class="t" style="left:1308px;width:200px;text-align:center;top:723.1px;font-size:15px;line-height:20px;color:#696b6f">2024–0<span class="n1">1</span>–04 <span class="n1">1</span>3:04:<span class="n1">1</span><span class="n1">1</span></div>
<div class="t" style="left:364px;width:200px;text-align:center;top:764.8px;font-size:14px;line-height:20px;color:#696b6f;font-size:15px">9</div>
<div class="t" style="left:786px;width:200px;text-align:center;top:764.8px;font-size:14px;line-height:20px;color:#696b6f;word-spacing:1px">第 1 天</div>
<div class="a" style="left:1134.5px;top:763.0px;width:34px;height:24px;background:#67c23a;border-radius:4px;color:#fff;font-size:12px;line-height:24px;text-align:center">+3</div>
<div class="t" style="left:1308px;width:200px;text-align:center;top:764.5px;font-size:15px;line-height:20px;color:#696b6f">2024–0<span class="n1">1</span>–0<span class="n1">1</span> <span class="n1">1</span>3:03:32</div>
<div class="t" style="left:364px;width:200px;text-align:center;top:806.4px;font-size:14px;line-height:20px;color:#696b6f;font-size:15px">8</div>
<div class="t" style="left:786px;width:200px;text-align:center;top:806.4px;font-size:14px;line-height:20px;color:#696b6f;word-spacing:1px">第 2 天</div>
<div class="a" style="left:1134.5px;top:804.6px;width:34px;height:24px;background:#67c23a;border-radius:4px;color:#fff;font-size:12px;line-height:24px;text-align:center">+3</div>
<div class="t" style="left:1308px;width:200px;text-align:center;top:806.1px;font-size:15px;line-height:20px;color:#696b6f">2024–0<span class="n1">1</span>–02 <span class="n1">1</span>3:03:2<span class="n1">1</span></div>

<!-- red highlight boxes -->
<div class="a" style="left:281.8px;top:502.5px;width:63.3px;height:50px;border:3px solid #f0407a"></div>
<div class="a" style="left:231.5px;top:637.5px;width:1406.5px;height:205.5px;border:3px solid #f0407a"></div>
<!-- gear float -->
<div class="a" style="left:1636px;top:545px;width:45px;height:40px;background:#409eff;border-radius:6px"></div>
<svg style="left:1647.2px;top:553.6px" width="18" height="18" viewBox="0 0 20 20">
 <g stroke="#fff" stroke-width="1.3" fill="none"><circle cx="10" cy="10" r="2.6"/>
 <path d="M8.6,3 H11.4 L11.9,5 L13.6,6 L15.6,5.4 L17,7.8 L15.5,9.2 V10.8 L17,12.2 L15.6,14.6 L13.6,14 L11.9,15 L11.4,17 H8.6 L8.1,15 L6.4,14 L4.4,14.6 L3,12.2 L4.5,10.8 V9.2 L3,7.8 L4.4,5.4 L6.4,6 L8.1,5 Z" stroke-linejoin="round"/></g>
</svg>
<!-- scrollbar -->
<div class="a" style="left:1668.2px;top:296px;width:5.8px;height:560px;background:rgba(150,150,150,0.42);border-radius:3px"></div>
<div id="header" class="a"></div>
<div id="tags" class="a"></div>
<svg style="left:0;top:112px" width="195" height="734">
 <defs><linearGradient id="lg" x1="0" y1="0" x2="0" y2="1"><stop offset="0" stop-color="#3a2a1c"/><stop offset=".55" stop-color="#4a3622"/><stop offset=".75" stop-color="#8a6a48"/><stop offset="1" stop-color="#a08060"/></linearGradient>
 <filter id="lb"><feGaussianBlur stdDeviation=".6"/></filter></defs>
 <g transform="translate(4,6)">
 <rect width="40" height="40" fill="url(#lg)"/>
 <g filter="url(#lb)">
  <circle cx="35" cy="5" r="3" fill="#7a5a3a"/>
  <path d="M6,4 Q12,8 9,14 Q6,19 11,22" stroke="#b0b0b0" stroke-width="2.2" fill="none"/>
  <path d="M12.5,0 L19.5,0 L19,10 L14,10 Z" fill="#e6d6d6"/><path d="M14.5,0 L18,0 L17.5,9 L15.5,9 Z" fill="#e0a0a4"/>
  <path d="M22.5,0 L29.7,0 L28.5,10 L23.5,10 Z" fill="#e6d6d6"/><path d="M24.8,0 L28.5,0 L27.3,9 L25.2,9 Z" fill="#e0a0a4"/>
  <ellipse cx="21" cy="17.5" rx="13" ry="8.5" fill="#ecebed"/>
  <ellipse cx="20" cy="31" rx="10" ry="9" fill="#c9bcc0"/>
  <ellipse cx="18" cy="24" rx="6" ry="3" fill="#e6dede"/>
 </g>
 <circle cx="15.5" cy="17" r="1.3" fill="#3a5a8a"/><circle cx="22" cy="17" r="1.3" fill="#2a4a7a"/>
 <ellipse cx="17.2" cy="23" rx="1.3" ry="1" fill="#a05050"/>
 </g>
 <!-- chevrons -->
 <g stroke="#bfcbd9" stroke-width="1.2" fill="none">
  <path d="M166.5,84 L170.3,88 L174.1,84"/>
  <path d="M166.5,140 L170.3,144 L174.1,140"/>
  <path d="M166.5,196 L170.3,200 L174.1,196"/>
  <path d="M166.5,252 L170.3,256 L174.1,252"/>
  <path d="M166.5,312.5 L170.3,308.5 L174.1,312.5"/>
  <path d="M166.5,668 L170.3,664 L174.1,668"/>
 </g>
 <!-- bike icon -->
 <g stroke="#bfcbd9" stroke-width="1.3" fill="none">
  <circle cx="23.8" cy="313.2" r="3"/><circle cx="32.2" cy="313.2" r="3"/>
  <path d="M23.8,313.2 L30.3,306.8 L32.2,313.2 M27.6,304.6 Q30,304.2 30.3,306.8 M21.3,307.4 Q23.3,306.8 24.2,308.6 L25.5,312"/>
 </g>
 <!-- submenu icons -->
 <g fill="#c7d3df">
  <!-- box -->
  <rect x="40" y="355.5" width="16" height="3.5"/>
  <rect x="41" y="360" width="14" height="10.5"/>
  <rect x="46" y="362" width="4" height="1.2" fill="#0f2438"/>
  <!-- user -->
  <circle cx="48" cy="407.5" r="3.6"/>
  <path d="M41.5,419.5 Q41.5,412.5 48,412.5 Q54.5,412.5 54.5,419.5 Z"/>
  <!-- asterisk -->
  <g stroke="#c7d3df" stroke-width="3.3" stroke-linecap="round"><path d="M48,606.5 V619 M42.6,609.6 L53.4,615.9 M53.4,609.6 L42.6,615.9"/></g>
  <!-- up arrow -->
  <path d="M48.3,505 L52.8,510.5 L49.7,510.5 L49.7,519.5 L44,519.5 L44,517.5 L46.9,517.5 L46.9,510.5 L43.8,510.5 Z"/>
  <!-- group -->
  <circle cx="48" cy="557" r="3"/><circle cx="43" cy="558.5" r="2.2"/><circle cx="53" cy="558.5" r="2.2"/>
  <path d="M42.5,569 Q42.5,561.5 48,561.5 Q53.5,561.5 53.5,569 Z"/>
  <path d="M39.8,566 Q39.8,561.5 43,561.5 Q44.5,561.5 45,562.5 Q42.5,564 42.5,566 Z M56.2,566 Q56.2,561.5 53,561.5 Q51.5,561.5 51,562.5 Q53.5,564 53.5,566 Z"/>
 </g>
 <g stroke="#c7d3df" stroke-width="1.3" fill="none">
  <!-- bookmark -->
  <path d="M44.5,455.5 H51.5 V469 L48,465.5 L44.5,469 Z" stroke-linejoin="round"/>
  <!-- alarm -->
  <circle cx="48" cy="666.5" r="5.8"/>
  <path d="M48,663 V666.8 H50.8 M42.5,660.5 L44.5,658.5 M53.5,660.5 L51.5,658.5 M44,671 L42.5,672.8 M52,671 L53.5,672.8"/>
  <path d="M41.6,661.2 A3,3 0 0 1 45,658.2 M54.4,661.2 A3,3 0 0 0 51,658.2"/>
  <!-- calendar -->
  <rect x="61.5" y="714" width="13.5" height="11.5" rx="1"/>
  <path d="M61.5,717.5 H75 M64.5,712.5 V715.5 M72,712.5 V715.5"/>
 </g>
 <g fill="#c7d3df"><rect x="64" y="719.5" width="1.6" height="1.4"/><rect x="67.5" y="719.5" width="1.6" height="1.4"/><rect x="71" y="719.5" width="1.6" height="1.4"/><rect x="64" y="722.3" width="1.6" height="1.4"/><rect x="67.5" y="722.3" width="1.6" height="1.4"/><rect x="71" y="722.3" width="1.6" height="1.4"/></g>
</svg>
<div class="t" style="left:54.5px;top:127px;font-size:16px;letter-spacing:-0.5px;line-height:22px;color:#fff;-webkit-text-stroke:0.55px #fff">芋道管理系统</div>
<div class="t mi" style="left:45.5px;top:188px">基础设施</div>
<div class="t mi" style="left:45.5px;top:244px">支付管理</div>
<div class="t mi" style="left:45.5px;top:300px">报表管理</div>
<div class="t mi" style="left:45.5px;top:356px">工作流程</div>
<div class="t mi" style="left:45.5px;top:412px">会员中心</div>
<div class="t mi" style="left:65.5px;top:465px">会员配置</div>
<div class="t mi" style="left:65.5px;top:515px">会员管理</div>
<div class="t mi" style="left:65.5px;top:565px">会员标签</div>
<div class="t mi" style="left:65.5px;top:615px">会员等级</div>
<div class="t mi" style="left:65.5px;top:665px">会员分组</div>
<div class="t mi" style="left:65.5px;top:715px">会员积分</div>
<div class="t mi" style="left:65.5px;top:768px">会员签到</div>
<div class="t mi" style="left:85.5px;top:821px">签到配置</div>

<svg style="left:195px;top:112px" width="1481" height="85">
 <!-- hamburger -->
 <g fill="#1a1a1a">
  <rect x="13" y="20.5" width="14" height="2.2" rx=".8"/>
  <rect x="18.3" y="24.8" width="8.7" height="2.4" rx="1"/>
  <path d="M14,26 L16.8,23.9 L16.8,28.1 Z"/>
  <rect x="13" y="29.8" width="14" height="2.2" rx=".8"/>
 </g>
 <g stroke="#222" stroke-width="2" fill="none">
  <!-- fullscreen -->
  <path d="M1185,23 V20 H1188 M1195,20 H1198 V23 M1198,30 V33 H1195 M1188,33 H1185 V30" stroke-linecap="square"/>
 </g>
 <g stroke="#333" stroke-width="1.5" fill="none">
  <circle cx="1227.5" cy="25.8" r="6.3"/><path d="M1232,30.5 L1235,33.5"/>
  <!-- bell -->
  <path d="M1333.8,28.8 H1348.4 M1335.8,28.8 V23.5 A5.3,5.3 0 0 1 1346.4,23.5 V28.8"/>
  <path d="M1341.1,15.8 V18"/><path d="M1339.6,30.6 Q1341.1,32.4 1342.6,30.6" stroke-width="1.6"/>
 </g>
 <!-- Tt -->
 <g fill="#333">
  <path d="M1258,20.5 H1266.5 V23 H1263.5 V31.5 H1261 V23 H1258 Z"/>
  <path d="M1265.5,24.5 H1272.5 V26.5 H1270 V31.5 H1268 V26.5 H1265.5 Z"/>
 </g>
 <!-- translate -->
 <g stroke="#333" stroke-width="1.3" fill="none">
  <path d="M1295.5,21.5 H1303 M1299.2,19.5 V21.5 M1301.5,21.5 Q1300,27 1295.5,29 M1297.5,23.5 Q1299.5,27.5 1302.5,28.5"/>
  <path d="M1302.5,33.5 L1306,25 L1309.5,33.5 M1303.5,31 H1308.5"/>
 </g>
 <!-- avatar -->
 <defs><linearGradient id="av" x1="0" y1="0" x2="0" y2="1">
  <stop offset="0" stop-color="#0a0c10"/><stop offset=".17" stop-color="#0a0c10"/><stop offset=".18" stop-color="#3d86d4"/><stop offset=".5" stop-color="#4790dc"/><stop offset=".62" stop-color="#2f70c8"/><stop offset=".7" stop-color="#3a80d8"/><stop offset="1" stop-color="#3a80d8"/></linearGradient>
  <clipPath id="avc"><circle cx="1390" cy="25.8" r="20"/></clipPath></defs>
 <circle cx="1390" cy="25.8" r="20" fill="url(#av)"/>
 <g clip-path="url(#avc)">
  <path d="M1368,28 Q1385,30 1412,34 V38 Q1390,33 1368,31 Z" fill="#1f5cb0" opacity=".7"/>
  <path d="M1368,37 L1371,35 L1373,37.5 L1376,34.5 L1378,37 L1381,35 L1384,37.5 L1387,35 L1390,37 L1393,35.5 L1396,37.5 L1399,34.5 L1402,37 L1405,35 L1408,37.5 L1412,35.5 V50 H1368 Z" fill="#0a0c10"/>
  <rect x="1390.3" y="27" width="1.4" height="10" fill="#0a0c10"/>
  <text x="1375" y="26.5" font-size="6.5" fill="#1a3a70" font-weight="bold">文 也 一</text>
 </g>
 <!-- tags bar right -->
 <g stroke="#e4e7ed" stroke-width="1"><path d="M36.5,51 V85 M1376.5,51 V85 M1411.5,51 V85 M1446.5,51 V85"/></g>
 <g stroke="#a6a6a6" stroke-width="1.2" fill="none">
  <path d="M19,62 L14.5,68 L19,74 M23.5,62 L19,68 L23.5,74"/>
  <path d="M1393.5,62 L1398,68 L1393.5,74 M1389,62 L1393.5,68 L1389,74"/>
  <path d="M1434.8,63.8 A6,6 0 1 0 1435.5,70"/>
 </g>
 <path d="M1431.8,62.6 L1436,62.3 L1435.7,66.5 Z" fill="#a6a6a6"/>
 <g fill="#9c9c9c"><rect x="1458" y="62" width="5.5" height="5.5"/><rect x="1465" y="62" width="5.5" height="5.5"/><rect x="1458" y="69" width="5.5" height="5.5"/><rect x="1465" y="69" width="5.5" height="5.5"/></g>
</svg>
<div class="t" style="left:1610.5px;top:128px;font-size:14px;line-height:20px;color:#666">芋道源码</div>
<div class="tag" style="left:235px;width:66px;padding-left:14.8px">首页</div>
<div class="tag" style="left:305.5px;width:106.5px;padding-left:31.5px">会员积分</div>
<div class="tag" style="left:416.5px;width:106.5px;padding-left:32.5px">签到配置</div>
<div class="tag" style="left:527.5px;width:106.5px;padding-left:32.5px">签到记录</div>
<div class="tag" style="left:638.5px;width:106.5px;padding-left:32.5px">会员管理</div>
<div class="tag" style="left:749.5px;width:89.5px;padding-left:15.5px">会员详情</div>
<div class="tag" style="left:843px;width:89.5px;padding-left:15.5px;background:#409eff;border-color:#409eff;color:#fff">会员详情</div>
<svg style="left:0;top:0" width="1676" height="200">
 <g stroke="#333" stroke-width="2.6" stroke-linecap="round"><path d="M324.5,175 V185 M320.2,177.5 L328.8,182.5 M328.8,177.5 L320.2,182.5"/></g>
 <g stroke="#888" stroke-width="1" fill="none"><rect x="430.5" y="175.5" width="10.5" height="9.5"/><path d="M430.5,178 H441 M430.5,181 H441 M433.5,178 V185 M436.5,178 V185"/></g>
 <g stroke="#777" stroke-width="1.2" fill="none"><path d="M542,185 L546.5,180.5 M545.5,177.5 A2,2 0 1 1 549,181 L547,183 A2,2 0 1 1 543.5,179.5 Z"/></g>
 <g fill="#444"><circle cx="657.5" cy="177.5" r="2.4"/><path d="M653,185.5 Q653,180.8 657.5,180.8 Q662,180.8 662,185.5 Z"/></g>
</svg>

</body></html>
